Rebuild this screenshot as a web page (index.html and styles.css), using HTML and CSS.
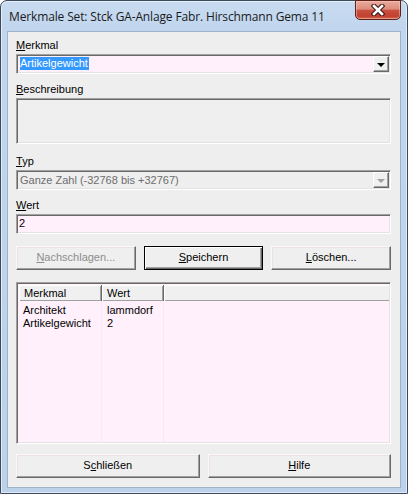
FILE: index.html
```html
<!DOCTYPE html>
<html lang="de">
<head>
<meta charset="utf-8">
<title>Merkmale Set</title>
<link rel="stylesheet" href="styles.css">
</head>
<body>
<div class="window">
  <div class="titlebar">
    <span class="title">Merkmale Set: Stck GA-Anlage Fabr. Hirschmann Gema 11</span>
    <div class="close">
      <svg width="14" height="12" viewBox="0 0 14 12">
        <path d="M3 2 L11 10 M11 2 L3 10" stroke="#3a1510" stroke-width="4.6" stroke-linecap="square" fill="none"/>
        <path d="M3 2 L11 10 M11 2 L3 10" stroke="#ffffff" stroke-width="2.6" stroke-linecap="square" fill="none"/>
      </svg>
    </div>
  </div>
  <div class="client">
    <div class="lbl first"><u>M</u>erkmal</div>
    <div class="combo pink">
      <div class="field"><span class="sel">Artikelgewicht</span></div>
      <div class="drop"><span class="arrow"></span></div>
    </div>
    <div class="lbl g9"><u>B</u>eschreibung</div>
    <div class="memo"></div>
    <div class="lbl g11"><u>T</u>yp</div>
    <div class="combo off">
      <div class="field">Ganze Zahl (-32768 bis +32767)</div>
      <div class="drop"><span class="arrow grey"></span></div>
    </div>
    <div class="lbl g9"><u>W</u>ert</div>
    <div class="edit">2</div>
    <div class="btnrow three">
      <div class="btn disabled"><u>N</u>achschlagen...</div>
      <div class="btn default"><u>S</u>peichern</div>
      <div class="btn"><u>L</u>öschen...</div>
    </div>
    <div class="list">
      <div class="lhead">
        <div class="hc c1">Merkmal</div>
        <div class="hc c2">Wert</div>
        <div class="hc c3"></div>
      </div>
      <div class="lbody">
        <div class="row"><span class="c1">Architekt</span><span class="c2">lammdorf</span></div>
        <div class="row"><span class="c1">Artikelgewicht</span><span class="c2">2</span></div>
      </div>
    </div>
    <div class="btnrow two">
      <div class="btn">S<u>c</u>hließen</div>
      <div class="btn"><u>H</u>ilfe</div>
    </div>
  </div>
</div>
</body>
</html>
```
FILE: styles.css
```css
html, body {
  margin: 0;
  padding: 0;
  width: 408px;
  height: 494px;
  overflow: hidden;
  background: #ffffff;
}

.window {
  box-sizing: border-box;
  width: 408px;
  height: 494px;
  display: flex;
  flex-direction: column;
  border: 1px solid #3b4a5c;
  border-radius: 7px 7px 0 0;
  background: linear-gradient(to bottom, #c8dbf0 0px, #c0d5ee 30px, #bcd1ea 100%);
  box-shadow: inset 0 0 0 1px rgba(255, 255, 255, 0.55);
}

.titlebar {
  height: 30px;
  display: flex;
  align-items: flex-start;
  padding: 0 6px 0 8px;
  box-sizing: border-box;
}

.title {
  font-family: "Open Sans", "Noto Sans", sans-serif;
  font-size: 12px;
  line-height: 15px;
  padding-top: 8px;
  color: #1b1b1b;
  letter-spacing: -0.14px;
  white-space: nowrap;
}

.close {
  margin-left: auto;
  margin-top: -1px;
  width: 46px;
  height: 20px;
  box-sizing: border-box;
  border: 1px solid #5e2219;
  border-radius: 0 0 5px 5px;
  background: linear-gradient(to bottom, #e9ab9d 0%, #dd8c7a 45%, #c9503f 52%, #c2402f 85%, #d7705a 100%);
  box-shadow: inset 0 0 0 1px rgba(255, 210, 200, 0.45);
  display: flex;
  align-items: center;
  justify-content: center;
}

.client {
  flex: 1;
  margin: 0 6px 5px 6px;
  border: 1px solid #9fb2c8;
  background: #eeeeee;
  display: flex;
  flex-direction: column;
  padding: 7px 9px 0 8px;
  font-family: "Liberation Sans", Arial, sans-serif;
  font-size: 11px;
  color: #000;
}

.lbl {
  height: 13px;
  line-height: 13px;
  margin-bottom: 2px;
}
.lbl.g9 { margin-top: 9px; }
.lbl.g11 { margin-top: 11px; }

/* sunken edit frame */
.combo, .memo, .edit, .list {
  box-sizing: border-box;
  border-style: solid;
  border-width: 1px;
  border-color: #a0a0a0 #ffffff #ffffff #a0a0a0;
  box-shadow: inset 1px 1px 0 #696969, inset -1px -1px 0 #e3e3e3;
}

.combo {
  height: 20px;
  display: flex;
  padding: 1px;
}
.combo.pink { background: #fff0fb; }
.combo.off { background: #eeeeee; color: #6d6d6d; }

.field {
  flex: 1;
  line-height: 13px;
  padding: 1px 0 0 3px;
}
.combo.off .field { padding: 2px 0 0 2px; }

.sel {
  display: inline-block;
  background: #3399ff;
  color: #ffffff;
  padding: 0 1px 0 0;
  margin-left: -1px;
}

.drop {
  width: 16px;
  box-sizing: border-box;
  background: #f0f0f0;
  border-style: solid;
  border-width: 1px;
  border-color: #ffffff #696969 #696969 #ffffff;
  box-shadow: inset -1px -1px 0 #a0a0a0;
  display: flex;
  align-items: center;
  justify-content: center;
}
.arrow {
  width: 0;
  height: 0;
  border-left: 4px solid transparent;
  border-right: 4px solid transparent;
  border-top: 4px solid #000;
  margin-top: 1px;
}
.arrow.grey { border-top-color: #a0a0a0; }

.memo {
  height: 46px;
  background: #efefef;
}

.edit {
  height: 20px;
  background: #fff0fb;
  line-height: 13px;
  padding: 2px 0 0 2px;
}

.btnrow {
  display: grid;
  gap: 8px;
  margin-top: 12px;
}
.btnrow.three { grid-template-columns: 1fr 1fr 1fr; }
.btnrow.two { grid-template-columns: 1fr 1fr; margin-top: 10px; }

.btn {
  height: 24px;
  box-sizing: border-box;
  background: #efefef;
  border-style: solid;
  border-width: 1px;
  border-color: #fdf6fb #696969 #696969 #fdf6fb;
  box-shadow: inset -1px -1px 0 #a0a0a0, inset 1px 1px 0 #e9e3e7;
  display: flex;
  align-items: center;
  justify-content: center;
  line-height: 13px;
  padding-bottom: 1px;
}
.btn.disabled { color: #8d8d8d; }
.btn.default {
  border-color: #000;
  box-shadow: inset 1px 1px 0 #ffffff, inset -1px -1px 0 #696969, inset -2px -2px 0 #a0a0a0;
}

.list {
  height: 162px;
  margin-top: 12px;
  background: #fff0fb;
  padding: 2px 1px 1px 2px;
  display: flex;
  flex-direction: column;
}

.lhead {
  display: flex;
  height: 16px;
}
.hc {
  box-sizing: border-box;
  height: 16px;
  background: #f0f0f0;
  line-height: 13px;
  padding: 2px 0 0 5px;
  border-right: 1px solid #696969;
  box-shadow: inset 1px 1px 0 #ffffff, inset -1px -1px 0 #a0a0a0;
}
.hc.c1 { width: 83px; }
.hc.c2 { width: 62px; }
.hc.c3 { flex: 1; border-right: none; box-shadow: inset 1px 1px 0 #ffffff, inset 0 -1px 0 #a0a0a0; }

.lbody {
  flex: 1;
  padding-top: 3px;
  background:
    linear-gradient(#f7e9f4, #f7e9f4) 82px 0 / 1px 100% no-repeat,
    linear-gradient(#f7e9f4, #f7e9f4) 144px 0 / 1px 100% no-repeat;
}
.row {
  display: flex;
  height: 13px;
  line-height: 13px;
}
.row .c1 { width: 84px; box-sizing: border-box; padding-left: 4px; }
.row .c2 { padding-left: 4px; }

u { text-decoration: underline; text-underline-offset: 1px; }
```
